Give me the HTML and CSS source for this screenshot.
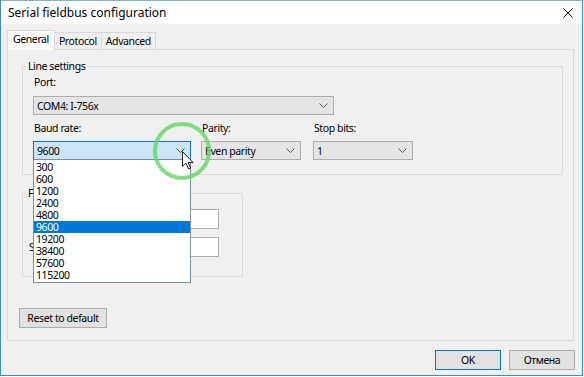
FILE: index.html
```html
<!DOCTYPE html>
<html lang="en">
<head>
    <meta charset="UTF-8">
    <title>Serial fieldbus configuration</title>
    <link rel="stylesheet" href="styles.css">
</head>
<body>
    <div class="window">
        <div class="titlebar">
            <span class="title">Serial fieldbus configuration</span>
            <svg class="close" width="10" height="10" viewBox="0 0 10 10">
                <path d="M0.5 0.5 L9.5 9.5 M9.5 0.5 L0.5 9.5" stroke="#111" stroke-width="1"/>
            </svg>
        </div>

        <div class="client">
            <div class="tabs">
                <div class="tab active">General</div>
                <div class="tab">Protocol</div>
                <div class="tab">Advanced</div>
            </div>

            <div class="panel">
                <fieldset class="group line-settings">
                    <legend>Line settings</legend>
                    <div class="label port-label">Port:</div>
                    <div class="combo port">
                        <span>COM4: I-756x</span>
                        <svg class="chev" width="9" height="5" viewBox="0 0 9 5"><path d="M0.5 0.5 L4.5 4.5 L8.5 0.5" fill="none" stroke="#606060"/></svg>
                    </div>

                    <div class="row">
                        <div class="field baud">
                            <div class="label">Baud rate:</div>
                            <div class="combo-wrap">
                                <div class="combo focused">
                                    <span>9600</span>
                                    <svg class="chev" width="9" height="5" viewBox="0 0 9 5"><path d="M0.5 0.5 L4.5 4.5 L8.5 0.5" fill="none" stroke="#505050"/></svg>
                                </div>
                                <ul class="droplist">
                                    <li>300</li>
                                    <li>600</li>
                                    <li>1200</li>
                                    <li>2400</li>
                                    <li>4800</li>
                                    <li class="selected">9600</li>
                                    <li>19200</li>
                                    <li>38400</li>
                                    <li>57600</li>
                                    <li>115200</li>
                                </ul>
                                <div class="click-ring"></div>
                                <svg class="cursor" width="12" height="19" viewBox="0 0 12 19">
                                    <path d="M0.5 0.5 L0.5 15.5 L4 12.2 L6.6 18 L8.6 17.1 L6.1 11.5 L11 11.5 Z" fill="#fff" stroke="#222" stroke-width="1" stroke-linejoin="round"/>
                                </svg>
                            </div>
                        </div>
                        <div class="field parity">
                            <div class="label">Parity:</div>
                            <div class="combo">
                                <span>Even parity</span>
                                <svg class="chev" width="9" height="5" viewBox="0 0 9 5"><path d="M0.5 0.5 L4.5 4.5 L8.5 0.5" fill="none" stroke="#606060"/></svg>
                            </div>
                        </div>
                        <div class="field stop">
                            <div class="label">Stop bits:</div>
                            <div class="combo">
                                <span>1</span>
                                <svg class="chev" width="9" height="5" viewBox="0 0 9 5"><path d="M0.5 0.5 L4.5 4.5 L8.5 0.5" fill="none" stroke="#606060"/></svg>
                            </div>
                        </div>
                    </div>
                </fieldset>

                <fieldset class="group frame">
                    <legend>Frame</legend>
                    <div class="frow">
                        <span class="flabel first">Timeout:</span>
                        <div class="textbox"></div>
                    </div>
                    <div class="frow">
                        <span class="flabel">Silence:</span>
                        <div class="textbox"></div>
                    </div>
                </fieldset>

                <button class="btn reset">Reset to default</button>
            </div>

            <div class="footer">
                <button class="btn ok">OK</button>
                <button class="btn">Отмена</button>
            </div>
        </div>
    </div>
</body>
</html>
```

FILE: styles.css
```css
body {
    margin: 0;
    font-family: "Noto Sans", sans-serif;
    font-size: 10.5px;
    letter-spacing: -0.4px;
    color: #000;
    background: #fff;
}
.window {
    width: 583px;
    height: 376px;
    box-sizing: border-box;
    border: 1px solid #3b8ad4;
    border-top-color: #7fb0de;
    background: #f0f0f0;
    display: flex;
    flex-direction: column;
}
.titlebar {
    height: 23px;
    background: #fff;
    display: flex;
    align-items: center;
    justify-content: space-between;
    padding: 0 9px 0 7px;
    flex-shrink: 0;
}
.title {
    font-size: 12px;
    letter-spacing: 0;
    line-height: 16px;
}
.client {
    flex: 1;
    padding: 6px 8px 0 6px;
    display: flex;
    flex-direction: column;
}
.tabs {
    display: flex;
    align-items: flex-end;
    height: 19px;
    position: relative;
    z-index: 1;
}
.tab {
    height: 16px;
    line-height: 16px;
    padding: 0 4px;
    border: 1px solid #d9d9d9;
    border-bottom: none;
    background: #f0f0f0;
    margin-left: -1px;
}
.tab.active {
    height: 19px;
    line-height: 17px;
    background: #fbfbfb;
    margin-left: 0;
    margin-bottom: -1px;
    padding: 0 5px;
}
.panel {
    height: 292px;
    box-sizing: border-box;
    border: 1px solid #d9d9d9;
    background: #f0f0f0;
    padding: 9px 10px 0 14px;
}
.group {
    margin: 0;
    border: 1px solid #dcdcdc;
    padding: 0 10px 14px 10px;
}
.group legend {
    line-height: 14px;
    padding: 0 2px;
    margin-left: -7px;
}
.label {
    line-height: 14px;
}
.port-label {
    margin: 2px 0 7px 1px;
}
.combo {
    height: 19px;
    box-sizing: border-box;
    border: 1px solid #adadad;
    background: #e5e5e5;
    display: flex;
    align-items: center;
    justify-content: space-between;
    padding: 0 5px 0 3px;
}
.combo.port {
    width: 301px;
}
.combo.focused {
    background: #cce4f7;
    border-color: #0078d7;
}
.row {
    display: flex;
    margin-top: 6px;
}
.field .label {
    margin: 0 0 6px 1px;
}
.baud {
    width: 158px;
}
.parity {
    width: 100px;
    margin-left: 10px;
}
.stop {
    width: 100px;
    margin-left: 12px;
}
.combo-wrap {
    position: relative;
}
.droplist {
    position: absolute;
    left: 0;
    top: 18px;
    width: 158px;
    box-sizing: border-box;
    margin: 0;
    padding: 1px 0;
    list-style: none;
    background: #fff;
    border: 1px solid #7a8ea8;
    z-index: 5;
}
.droplist li {
    height: 12px;
    line-height: 12px;
    padding-left: 2px;
}
.droplist li.selected {
    background: #0078d7;
    color: #fff;
}
.click-ring {
    position: absolute;
    left: 120px;
    top: -19px;
    width: 58px;
    height: 58px;
    box-sizing: border-box;
    border: 4px solid rgba(100, 215, 100, 0.8);
    border-radius: 50%;
    z-index: 6;
}
.cursor {
    position: absolute;
    left: 149px;
    top: 10px;
    z-index: 7;
}
.group.frame {
    width: 221px;
    box-sizing: border-box;
    margin-top: 11px;
    padding: 9px 23px 19px 6px;
}
.group.frame legend {
    margin-left: -3px;
}
.frow {
    display: flex;
    align-items: center;
    justify-content: space-between;
    height: 20px;
}
.frow + .frow {
    margin-top: 8px;
}
.flabel.first {
    padding-left: 6px;
}
.textbox {
    width: 48px;
    height: 20px;
    box-sizing: border-box;
    border: 1px solid #adadad;
    background: #fff;
}
.btn {
    font-family: "Noto Sans", sans-serif;
    font-size: 10.5px;
    letter-spacing: -0.4px;
    white-space: nowrap;
    height: 20px;
    padding: 0;
    border: 1px solid #adadad;
    background: #e1e1e1;
    color: #000;
}
.reset {
    display: block;
    width: 88px;
    margin: 31px 0 0 -3px;
}
.footer {
    display: flex;
    justify-content: flex-end;
    gap: 8px;
    margin-top: 9px;
    margin-right: -1px;
}
.footer .btn {
    width: 66px;
}
.btn.ok {
    border-color: #0078d7;
}
```
